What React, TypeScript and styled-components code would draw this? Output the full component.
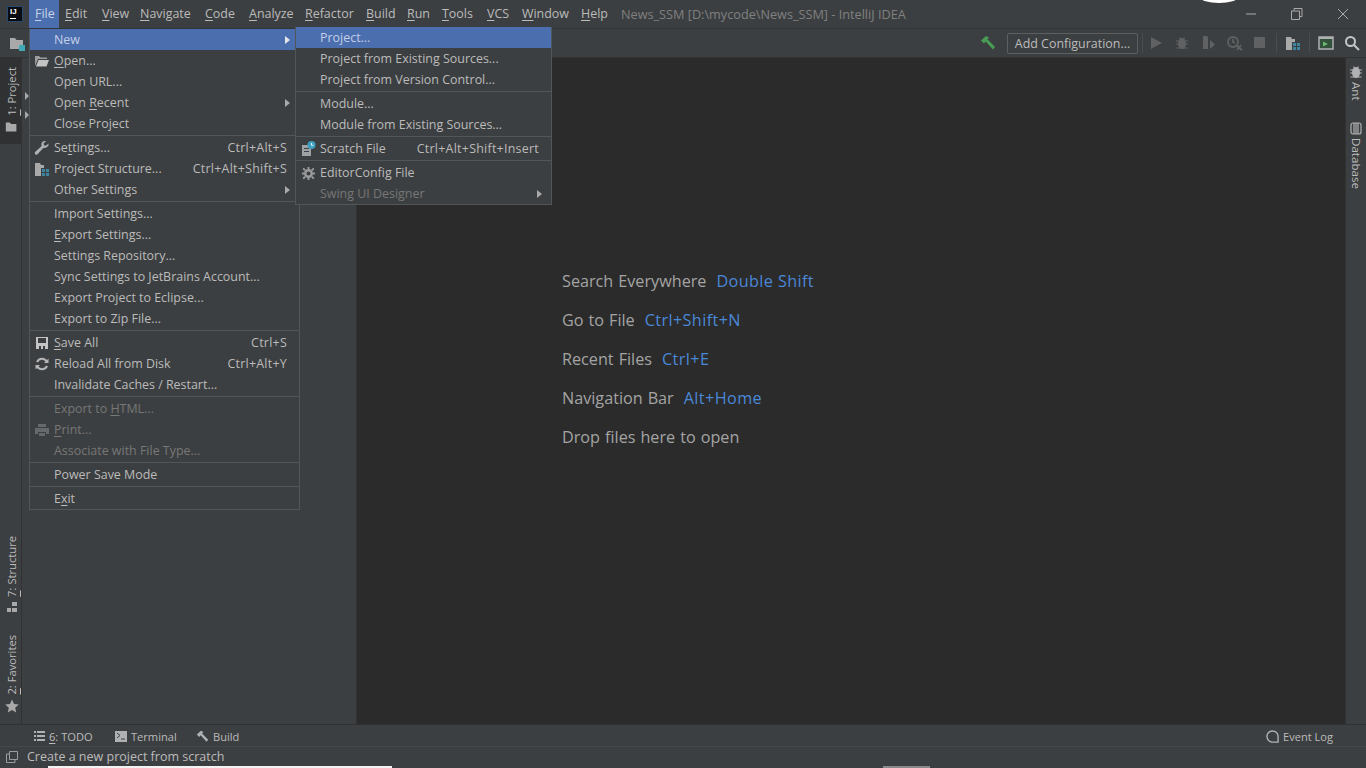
import React from 'react';
import styled, { createGlobalStyle } from 'styled-components';

const Global = createGlobalStyle`
  html, body { margin: 0; padding: 0; width: 1366px; height: 768px; overflow: hidden; background: #3c3f41; }
  * { box-sizing: border-box; }
  u { text-underline-offset: 2px; text-decoration-thickness: 1px; }
`;

const FONT = `"Open Sans", "Noto Sans", sans-serif`;

const Window = styled.div`
  position: relative;
  width: 1366px;
  height: 768px;
  display: flex;
  flex-direction: column;
  background: #3c3f41;
  color: #bbbbbb;
  font-family: ${FONT};
  font-size: 12.45px;
  overflow: hidden;
`;

/* title bar */
const TitleBar = styled.div`
  height: 28px;
  flex: none;
  display: flex;
  align-items: center;
  padding-left: 7px;
`;

const Logo = styled.div`
  width: 16px;
  height: 16px;
  background: #0b0b12;
  border: 1px solid #274a70;
  color: #fff;
  font: bold 8px/9px "Liberation Sans", sans-serif;
  padding-left: 2px;
  position: relative;
  margin-right: 6px;

  &::after {
    content: '';
    position: absolute;
    left: 2px;
    bottom: 2px;
    width: 6px;
    height: 1px;
    background: #fff;
  }
`;

const MenuBar = styled.div`
  display: flex;
  height: 28px;
`;

const MenuTitle = styled.div<{ $open?: boolean; $w: number }>`
  width: ${(p) => p.$w}px;
  padding-left: 6px;
  line-height: 28px;
  background: ${(p) => (p.$open ? '#4b6eaf' : 'transparent')};
  color: ${(p) => (p.$open ? '#c8d2e4' : '#bbbbbb')};
`;

const WindowTitle = styled.div`
  margin-left: 6px;
  color: #808080;
  font-size: 12.7px;
`;

const WindowButtons = styled.div`
  margin-left: auto;
  display: flex;
  align-items: center;
`;

const WinBtn = styled.div`
  width: 46px;
  height: 28px;
  display: flex;
  align-items: center;
  justify-content: center;
`;

const Notch = styled.div`
  position: absolute;
  left: 1200px;
  top: -9px;
  width: 38px;
  height: 12px;
  border-radius: 50%;
  background: #ffffff;
`;

/* toolbar */
const Toolbar = styled.div`
  height: 30px;
  flex: none;
  display: flex;
  align-items: center;
  border-top: 1px solid #323537;
  border-bottom: 1px solid #323232;
  padding-left: 9px;
  padding-right: 1px;
`;

const ToolbarSpacer = styled.div`
  flex: 1;
`;

const ToolIcon = styled.div`
  width: 26px;
  height: 22px;
  display: flex;
  align-items: center;
  justify-content: center;
`;

const ConfigButton = styled.div`
  width: 131px;
  height: 21px;
  border: 1px solid #5e6060;
  border-radius: 2px;
  display: flex;
  align-items: center;
  justify-content: center;
  margin: 0 4px 0 6px;
  color: #bbbbbb;
`;

const ToolSep = styled.div<{ $m?: number }>`
  width: 1px;
  height: 20px;
  margin: 0 ${(p) => p.$m ?? 3}px;
  background: #4a4d4f;
`;

/* main */
const Main = styled.div`
  flex: 1;
  min-height: 0;
  display: flex;
`;

const LeftStrip = styled.div`
  width: 22px;
  flex: none;
  display: flex;
  flex-direction: column;
  border-right: 1px solid #323232;
`;

const SideTab = styled.div<{ $active?: boolean; $h: number }>`
  height: ${(p) => p.$h}px;
  display: flex;
  flex-direction: column-reverse;
  align-items: center;
  gap: 4px;
  padding: 0 0 11px 2px;
  background: ${(p) => (p.$active ? '#2f3133' : 'transparent')};
`;

const SideLabel = styled.span`
  writing-mode: vertical-rl;
  transform: rotate(180deg);
  font-size: 11.2px;
  line-height: 13px;
  white-space: nowrap;
`;

const SideFill = styled.div`
  flex: 1;
`;

const ProjectPanel = styled.div`
  width: 335px;
  flex: none;
  padding: 34px 0 0 3px;
  display: flex;
  flex-direction: column;
  gap: 11px;
  border-right: 1px solid #323232;
`;

const TreeArrow = styled.div`
  width: 0;
  height: 0;
  border-left: 4px solid #a8a8a8;
  border-top: 4px solid transparent;
  border-bottom: 4px solid transparent;
`;

const Editor = styled.div`
  flex: 1;
  background: #2b2b2b;
  padding: 212px 0 0 205px;
  display: flex;
  flex-direction: column;
  gap: 16px;
  font-size: 16.2px;
  line-height: 23px;
  word-spacing: 0.8px;
  color: #a4a4a4;
`;

const Hint = styled.div`
  display: flex;
  gap: 10px;
`;

const Key = styled.span`
  color: #4a88d8;
  letter-spacing: 0.4px;
  word-spacing: 0;
`;

const RightStrip = styled.div`
  width: 21px;
  flex: none;
  border-left: 1px solid #323232;
  display: flex;
  flex-direction: column;
  align-items: center;
  padding-top: 7px;
  gap: 21px;
`;

const RightTab = styled.div`
  display: flex;
  flex-direction: column;
  align-items: center;
  gap: 3px;
`;

const RightLabel = styled.span`
  writing-mode: vertical-rl;
  font-size: 11.6px;
  line-height: 13px;
`;

/* bottom */
const BottomTools = styled.div`
  height: 22px;
  flex: none;
  display: flex;
  align-items: center;
  padding: 1px 31px 0 34px;
  border-top: 1px solid #323232;
  font-size: 11.1px;
`;

const BottomTab = styled.div<{ $w: number }>`
  width: ${(p) => p.$w}px;
  display: flex;
  align-items: center;
  gap: 4px;
  white-space: nowrap;
`;

const StatusBar = styled.div`
  height: 22px;
  flex: none;
  display: flex;
  align-items: center;
  padding: 0 0 2px 6px;
  gap: 9px;
  border-top: 1px solid #45484a;
  font-size: 12.5px;
`;

const Leftover = styled.div<{ $x: number; $w: number; $c: string }>`
  position: absolute;
  left: ${(p) => p.$x}px;
  bottom: 0;
  width: ${(p) => p.$w}px;
  height: 2px;
  background: ${(p) => p.$c};
`;

/* menus */
const Popup = styled.div<{ $x: number; $y: number; $w: number }>`
  position: absolute;
  left: ${(p) => p.$x}px;
  top: ${(p) => p.$y}px;
  width: ${(p) => p.$w}px;
  background: #3c3f41;
  border: 1px solid #515658;
  border-top: 0;
  z-index: 5;
`;

const Row = styled.div<{ $active?: boolean; $off?: boolean }>`
  position: relative;
  height: 21px;
  display: flex;
  align-items: center;
  padding: 0 12px 0 24px;
  white-space: nowrap;
  background: ${(p) => (p.$active ? '#4b6eaf' : 'transparent')};
  color: ${(p) => (p.$active ? '#c3cfe6' : p.$off ? '#777777' : '#bbbbbb')};
`;

const Shortcut = styled.span`
  margin-left: auto;
  letter-spacing: 0.25px;
`;

const SubArrow = styled.span<{ $light?: boolean }>`
  margin: 0 -3px 0 auto;
  width: 0;
  height: 0;
  border-left: 5px solid ${(p) => (p.$light ? '#e6e6e6' : '#a9a9a9')};
  border-top: 4px solid transparent;
  border-bottom: 4px solid transparent;
`;

const RowIcon = styled.span`
  position: absolute;
  top: 3px;
  left: 4px;
  display: flex;
  width: 16px;
  height: 16px;
  align-items: center;
  justify-content: center;
`;

const Sep = styled.div`
  height: 3px;
  padding-top: 1px;

  &::before {
    content: '';
    display: block;
    height: 1px;
    background: #515658;
  }
`;

/* icons */
const Folder = ({ c = '#a9a9a9', badge, s = 16 }: { c?: string; badge?: string; s?: number }) => (
  <svg width={s} height={s} viewBox="0 0 16 16">
    <path d="M1 3h5l1.500 2H14v9H1z" fill={c} />
    {badge && <rect x="10" y="10" width="6" height="6" fill={badge} />}
  </svg>
);
const OpenFolder = () => (
  <svg width="16" height="16" viewBox="0 0 16 16">
    <path d="M1 3h4l1.500 1.500H13V6H4L1 13z" fill="#9d9d9d" />
    <path d="M4.500 7H15l-2.500 6.500H2z" fill="#c4c4c4" />
  </svg>
);
const Wrench = () => (
  <svg width="16" height="16" viewBox="0 0 16 16">
    <path d="M14.500 3.500l-2.600 2.200-1.900-.4-.5-1.800L12 1.200C9.600.4 7.300 2 7.400 4.500c0 .6.1 1 .3 1.400L1.300 11.700c-.8.8-.7 1.900 0 2.500.7.700 1.800.7 2.500-.1l5.700-6.400c2.700 1 5.600-1.500 5-4.200z" fill="#afb1b3" />
  </svg>
);
const Structure = () => (
  <svg width="16" height="16" viewBox="0 0 16 16">
    <path d="M1 2h5l1 2h3v3H7v8H1z" fill="#a9a9a9" />
    <path d="M8 8h3v3H8zM12 8h3v3h-3zM8 12h3v3H8zM12 12h3v3h-3z" fill="#3e86a0" />
  </svg>
);
const Save = () => (
  <svg width="16" height="16" viewBox="0 0 16 16">
    <path d="M2 2h12v12H2z" fill="#c4c4c4" />
    <path d="M4 3h8v5H4zM5 11h2v3H5zM9 11h2v3H9z" fill="#3c3f41" />
  </svg>
);
const Reload = () => (
  <svg width="16" height="16" viewBox="0 0 16 16" fill="none" stroke="#b5b5b5" strokeWidth="2">
    <path d="M13 6A5.500 5.500 0 0 0 3 6" />
    <path d="M3 10a5.500 5.500 0 0 0 10 0" />
    <path d="M14.500 2.500v4.500H10z" fill="#b5b5b5" stroke="none" />
    <path d="M1.500 13.500V9H6z" fill="#b5b5b5" stroke="none" />
  </svg>
);
const Printer = () => (
  <svg width="16" height="16" viewBox="0 0 16 16">
    <path d="M4 2h8v3H4zM1 6h14v6h-3v-2H4v2H1zM5 11h6v3H5z" fill="#66696b" />
  </svg>
);
const Scratch = () => (
  <svg width="16" height="16" viewBox="0 0 16 16">
    <path d="M2 4h9v11H2z" fill="#9fa2a4" />
    <path d="M4 7h5v1H4zM4 10h5v1H4z" fill="#3c3f41" />
    <circle cx="11.500" cy="4" r="4" fill="#3f9fc0" />
    <path d="M11.500 2v2.300h1.800" stroke="#e8f4f8" fill="none" />
  </svg>
);
const Gear = ({ c = '#9a9c9e' }: { c?: string }) => (
  <svg width="13" height="13" viewBox="0 0 14 14">
    <circle cx="7" cy="7" r="3.500" fill="none" stroke={c} strokeWidth="2.600" />
    <path d="M6 0h2v2.500H6zM6 11.500h2V14H6zM0 6h2.500v2H0zM11.500 6H14v2h-2.500zM2 .8l2 2-1.400 1.400-2-2zM12 .8l1.400 1.400-2 2L10 2.800zM2.600 9.800L4 11.200l-2 2-1.400-1.400zM11.400 9.800l2 2L12 13.200l-2-2z" fill={c} />
  </svg>
);
const Hammer = ({ c = '#499c54', s = 16 }: { c?: string; s?: number }) => (
  <svg width={s} height={s} viewBox="0 0 16 16">
    <path d="M1 5.500L6 1l3 1.500-1.500 1.700L15 12l-2 2.500-7.300-8-1.700 2z" fill={c} />
  </svg>
);
const Play = () => (
  <svg width="14" height="14" viewBox="0 0 14 14"><path d="M2 1l11 6-11 6z" fill="#5f6163" /></svg>
);
const Bug = ({ c = '#5f6163', s = 14 }: { c?: string; s?: number }) => (
  <svg width={s} height={s} viewBox="0 0 14 14">
    <ellipse cx="7" cy="7.500" rx="4" ry="5.500" fill={c} />
    <path d="M1 5h12M1 8h12M1.500 12h11M4.500 1.500l1.500 2M9.500 1.500L8 3.500" stroke={c} strokeWidth="1.200" />
  </svg>
);
const Coverage = () => (
  <svg width="16" height="16" viewBox="0 0 16 16">
    <path d="M3 1h4l1 1v12H3z" fill="#5f6163" />
    <path d="M10 5v9l5-4.500z" fill="#5f6163" />
  </svg>
);
const Profile = () => (
  <svg width="17" height="16" viewBox="0 0 17 16" fill="none" stroke="#5f6163" strokeWidth="1.800">
    <circle cx="7" cy="7" r="5" />
    <path d="M7 4v3l2 1M10 10l6 5M15 10l-4 5" />
  </svg>
);
const Stop = () => (
  <svg width="12" height="12" viewBox="0 0 12 12"><rect width="11" height="11" fill="#5f6163" /></svg>
);
const RunAnything = () => (
  <svg width="16" height="14" viewBox="0 0 16 14">
    <path d="M1 1h14v12H1z" fill="#33503a" stroke="#aeb0b2" strokeWidth="1.500" />
    <path d="M1 1h14v2H1z" fill="#aeb0b2" />
    <path d="M5 5.500l5 2.500-5 2.500z" fill="#6ab672" />
  </svg>
);
const Search = () => (
  <svg width="16" height="16" viewBox="0 0 16 16" fill="none" stroke="#c4c6c8" strokeWidth="2">
    <circle cx="6.500" cy="6.500" r="4.500" />
    <path d="M10 10l5 5" />
  </svg>
);
const StructureSmall = () => (
  <svg width="12" height="12" viewBox="0 0 12 12">
    <path d="M6 1h5v4H6zM1 7h4v4H1zM6 7h5v4H6z" fill="#a9a9a9" />
  </svg>
);
const Star = () => (
  <svg width="14" height="14" viewBox="0 0 14 14">
    <path d="M7 .5l2 4.500 4.800.5-3.600 3.200 1 4.800L7 11l-4.200 2.500 1-4.800L.2 5.500 5 5z" fill="#a9a9a9" />
  </svg>
);
const Database = () => (
  <svg width="12" height="13" viewBox="0 0 12 13" fill="none" stroke="#afb1b3" strokeWidth="1.200">
    <rect x="1" y="1" width="10" height="11" rx="2" />
    <path d="M4 1v11M6 1v11M8 1v11" />
  </svg>
);
const TodoIcon = () => (
  <svg width="11" height="10" viewBox="0 0 11 10">
    <path d="M0 0h2v2H0zM3 0h8v2H3zM0 4h2v2H0zM3 4h8v2H3zM0 8h2v2H0zM3 8h8v2H3z" fill="#afb1b3" />
  </svg>
);
const TerminalIcon = () => (
  <svg width="12" height="11" viewBox="0 0 12 11">
    <rect width="12" height="11" fill="#afb1b3" />
    <path d="M2 2l3 2.500L2 7M6 8h4" fill="none" stroke="#3c3f41" />
  </svg>
);
const ChatIcon = () => (
  <svg width="13" height="13" viewBox="0 0 14 14" fill="none" stroke="#afb1b3" strokeWidth="1.500">
    <path d="M7 1a6 6 0 1 0 0 12h6V7a6 6 0 0 0-6-6z" />
  </svg>
);
const FrameIcon = () => (
  <svg width="12" height="12" viewBox="0 0 12 12" fill="none" stroke="#9a9c9e">
    <path d="M3.500 .5h8v8h-8zM3.500 3H.5v8.500h8.500V9" />
  </svg>
);
const Minimize = () => (
  <svg width="12" height="12" viewBox="0 0 12 12"><path d="M1 6h10" stroke="#aaaaaa" /></svg>
);
const Restore = () => (
  <svg width="12" height="12" viewBox="0 0 12 12" fill="none" stroke="#aaaaaa">
    <path d="M3 2.500V.5h8v8H9M.5 3h8v8.500H.5z" />
  </svg>
);
const Close = () => (
  <svg width="12" height="12" viewBox="0 0 12 12"><path d="M1 1l10 10M11 1L1 11" stroke="#aaaaaa" /></svg>
);

type Item = {
  text: React.ReactNode;
  key?: string;
  arrow?: boolean;
  off?: boolean;
  active?: boolean;
  icon?: React.ReactNode;
};

const MENUS: [string, number][] = [
  ['File', 30], ['Edit', 37], ['View', 38], ['Navigate', 65], ['Code', 44], ['Analyze', 56],
  ['Refactor', 61], ['Build', 41], ['Run', 35], ['Tools', 45], ['VCS', 35], ['Window', 59], ['Help', 40],
];

const U = ({ children }: { children: React.ReactNode }) => <u>{children}</u>;

const FILE_MENU: Item[][] = [
  [
    { text: 'New', arrow: true, active: true },
    { text: <><U>O</U>pen...</>, icon: <OpenFolder /> },
    { text: 'Open URL...' },
    { text: <>Open <U>R</U>ecent</>, arrow: true },
    { text: 'Close Project' },
  ],
  [
    { text: <>Se<U>t</U>tings...</>, key: 'Ctrl+Alt+S', icon: <Wrench /> },
    { text: 'Project Structure...', key: 'Ctrl+Alt+Shift+S', icon: <Structure /> },
    { text: 'Other Settings', arrow: true },
  ],
  [
    { text: 'Import Settings...' },
    { text: <><U>E</U>xport Settings...</> },
    { text: 'Settings Repository...' },
    { text: 'Sync Settings to JetBrains Account...' },
    { text: 'Export Project to Eclipse...' },
    { text: 'Export to Zip File...' },
  ],
  [
    { text: <><U>S</U>ave All</>, key: 'Ctrl+S', icon: <Save /> },
    { text: 'Reload All from Disk', key: 'Ctrl+Alt+Y', icon: <Reload /> },
    { text: 'Invalidate Caches / Restart...' },
  ],
  [
    { text: <>Export to <U>H</U>TML...</>, off: true },
    { text: <><U>P</U>rint...</>, off: true, icon: <Printer /> },
    { text: 'Associate with File Type...', off: true },
  ],
  [{ text: 'Power Save Mode' }],
  [{ text: <>E<U>x</U>it</> }],
];

const NEW_MENU: Item[][] = [
  [
    { text: 'Project...', active: true },
    { text: 'Project from Existing Sources...' },
    { text: 'Project from Version Control...' },
  ],
  [{ text: 'Module...' }, { text: 'Module from Existing Sources...' }],
  [{ text: 'Scratch File', key: 'Ctrl+Alt+Shift+Insert', icon: <Scratch /> }],
  [
    { text: 'EditorConfig File', icon: <Gear /> },
    { text: 'Swing UI Designer', arrow: true, off: true },
  ],
];

function Menu({ groups, x, y, w }: { groups: Item[][]; x: number; y: number; w: number }) {
  return (
    <Popup $x={x} $y={y} $w={w}>
      {groups.map((g, i) => (
        <React.Fragment key={i}>
          {i > 0 && <Sep />}
          {g.map((it, j) => (
            <Row key={j} $active={it.active} $off={it.off}>
              {it.icon && <RowIcon>{it.icon}</RowIcon>}
              <span>{it.text}</span>
              {it.key && <Shortcut>{it.key}</Shortcut>}
              {it.arrow && <SubArrow $light={it.active} />}
            </Row>
          ))}
        </React.Fragment>
      ))}
    </Popup>
  );
}

export default function App() {
  return (
    <Window>
      <Global />
      <TitleBar>
        <Logo>IJ</Logo>
        <MenuBar>
          {MENUS.map(([m, w], i) => (
            <MenuTitle key={m} $open={i === 0} $w={w}>
              <U>{m[0]}</U>
              {m.slice(1)}
            </MenuTitle>
          ))}
        </MenuBar>
        <WindowTitle>News_SSM [D:\mycode\News_SSM] - IntelliJ IDEA</WindowTitle>
        <WindowButtons>
          <WinBtn><Minimize /></WinBtn>
          <WinBtn><Restore /></WinBtn>
          <WinBtn><Close /></WinBtn>
        </WindowButtons>
      </TitleBar>
      <Notch />

      <Toolbar>
        <Folder badge="#3fa9b5" />
        <ToolbarSpacer />
        <ToolIcon><Hammer /></ToolIcon>
        <ConfigButton>Add Configuration...</ConfigButton>
        <ToolSep $m={0} />
        <ToolIcon><Play /></ToolIcon>
        <ToolIcon><Bug /></ToolIcon>
        <ToolIcon><Coverage /></ToolIcon>
        <ToolIcon><Profile /></ToolIcon>
        <ToolIcon><Stop /></ToolIcon>
        <ToolSep />
        <ToolIcon><Structure /></ToolIcon>
        <ToolSep />
        <ToolIcon><RunAnything /></ToolIcon>
        <ToolIcon><Search /></ToolIcon>
      </Toolbar>

      <Main>
        <LeftStrip>
          <SideTab $active $h={86}>
            <Folder s={13} />
            <SideLabel><U>1</U>: Project</SideLabel>
          </SideTab>
          <SideFill />
          <SideTab $h={88}>
            <StructureSmall />
            <SideLabel><U>7</U>: Structure</SideLabel>
          </SideTab>
          <SideTab $h={100}>
            <Star />
            <SideLabel><U>2</U>: Favorites</SideLabel>
          </SideTab>
        </LeftStrip>
        <ProjectPanel>
          <TreeArrow />
          <TreeArrow />
        </ProjectPanel>
        <Editor>
          <Hint>Search Everywhere <Key>Double Shift</Key></Hint>
          <Hint>Go to File <Key>Ctrl+Shift+N</Key></Hint>
          <Hint>Recent Files <Key>Ctrl+E</Key></Hint>
          <Hint>Navigation Bar <Key>Alt+Home</Key></Hint>
          <Hint>Drop files here to open</Hint>
        </Editor>
        <RightStrip>
          <RightTab>
            <Bug c="#afb1b3" />
            <RightLabel>Ant</RightLabel>
          </RightTab>
          <RightTab>
            <Database />
            <RightLabel>Database</RightLabel>
          </RightTab>
        </RightStrip>
      </Main>

      <BottomTools>
        <BottomTab $w={81}><TodoIcon /><span><U>6</U>: TODO</span></BottomTab>
        <BottomTab $w={81}><TerminalIcon /><span>Terminal</span></BottomTab>
        <BottomTab $w={60}><Hammer c="#afb1b3" s={13} /><span>Build</span></BottomTab>
        <ToolbarSpacer />
        <BottomTab $w={69}><ChatIcon /><span>Event Log</span></BottomTab>
      </BottomTools>
      <StatusBar>
        <FrameIcon />
        <span>Create a new project from scratch</span>
      </StatusBar>
      <Leftover $x={48} $w={344} $c="#f2f2f2" />
      <Leftover $x={883} $w={47} $c="#8a8a8a" />

      <Menu groups={FILE_MENU} x={29} y={29} w={271} />
      <Menu groups={NEW_MENU} x={295} y={27} w={257} />
    </Window>
  );
}
